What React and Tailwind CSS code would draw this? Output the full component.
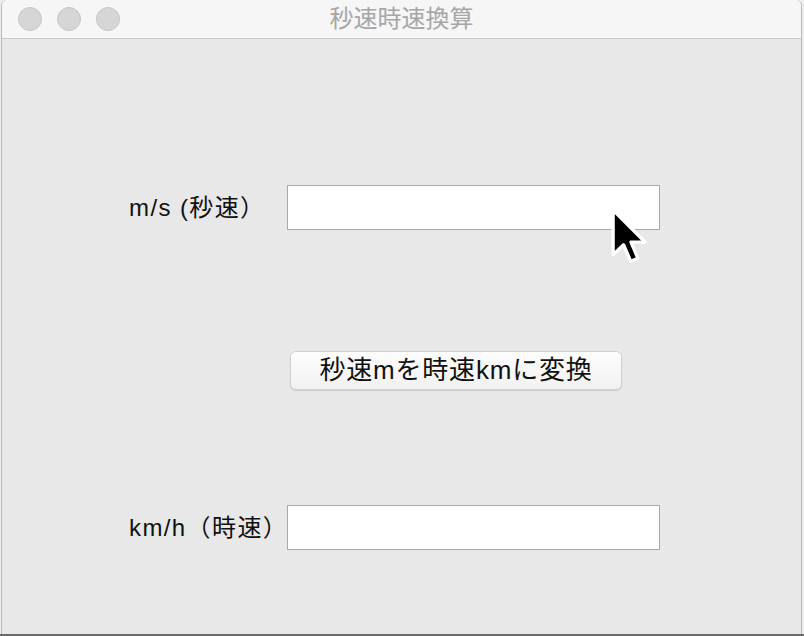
import React from "react";

const FONT = { fontFamily: '"Liberation Sans", "Noto Sans CJK JP", sans-serif' };

function Light() {
  return <div className="w-[24px] h-[24px] rounded-full bg-[#d6d6d6] border border-[#c6c6c6]" />;
}

function Cursor() {
  return (
    <svg
      className="absolute left-[609px] top-[206px]"
      width="44"
      height="66"
      viewBox="-1.5 -1.5 16 24"
    >
      <path
        d="M0 0 L0 16.2 L3.8 12.6 L6.4 18.6 L9.0 17.5 L6.5 11.6 L11.6 11.6 Z"
        fill="#000"
        stroke="#fff"
        strokeWidth="1.2"
        strokeLinejoin="round"
      />
    </svg>
  );
}

export default function App() {
  return (
    <div className="relative w-[804px] h-[636px] bg-[#ececec] overflow-hidden" style={FONT}>
      <div className="flex flex-col w-[801px] h-[634px] ml-[1px] border-l border-r border-[#b8b8b8] rounded-t-[6px] overflow-hidden bg-[#e8e8e8]">
        {/* title bar */}
        <div className="relative flex items-center h-[39px] shrink-0 bg-[#f6f6f6] border-b border-[#c9c9c9] pl-[16px] gap-[15px]">
          <Light />
          <Light />
          <Light />
          <div className="absolute inset-0 flex items-center justify-center pb-[1px] text-[24px] leading-none text-[#a6a6a6]">
            秒速時速換算
          </div>
        </div>
        {/* content */}
        <div className="flex flex-col pl-[127px] pt-[146px] text-[#111111]">
          <div className="flex items-center h-[45px]">
            <div className="w-[158px] text-[24px] leading-none tracking-[1.4px]">m/s (秒速）</div>
            <div className="w-[373px] h-[45px] bg-white border border-[#a9a9a9]" />
          </div>
          <div className="flex mt-[121px] pl-[161px]">
            <button className="w-[332px] h-[39px] rounded-[6px] bg-gradient-to-b from-[#fdfdfd] to-[#f1f1f1] border border-[#d0d0d0] shadow-[0_1px_1px_rgba(0,0,0,0.12)] text-[26px] leading-none tracking-[0.8px] text-[#111111] flex items-center justify-center pb-[1px]">
              秒速mを時速kmに変換
            </button>
          </div>
          <div className="flex items-center h-[45px] mt-[115px]">
            <div className="w-[158px] text-[24px] leading-none tracking-[1.4px] whitespace-nowrap">km/h（時速）</div>
            <div className="w-[373px] h-[45px] bg-white border border-[#a9a9a9]" />
          </div>
        </div>
      </div>
      <div className="h-[2px] bg-[#6a6a6a]" />
      <Cursor />
    </div>
  );
}
